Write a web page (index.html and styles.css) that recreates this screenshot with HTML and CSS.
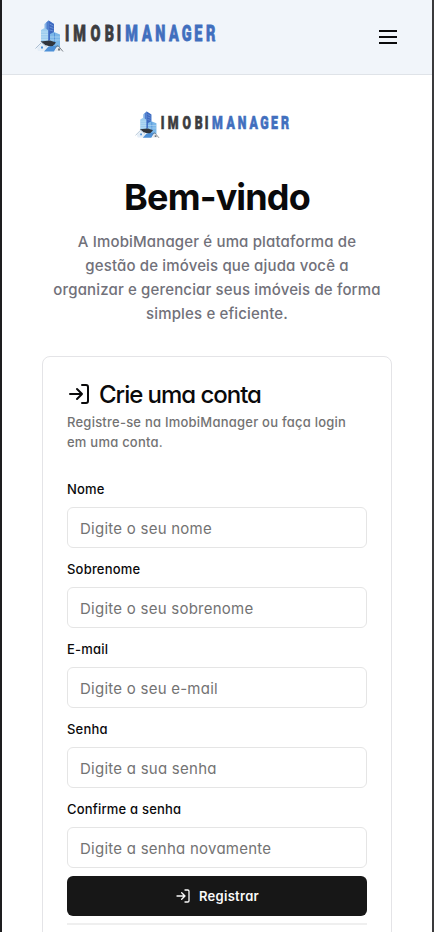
FILE: index.html
```
<!DOCTYPE html>
<html lang="pt-BR">
<head>
<meta charset="utf-8">
<meta name="viewport" content="width=device-width, initial-scale=1">
<title>ImobiManager</title>
<link rel="stylesheet" href="styles.css">
</head>
<body>
<svg class="defs" width="0" height="0" aria-hidden="true">
  <symbol id="login" viewBox="0 0 24 24"><path d="M15 3h4a2 2 0 0 1 2 2v14a2 2 0 0 1-2 2h-4M10 17l5-5-5-5M15 12H3" fill="none" stroke="currentColor" stroke-width="2" stroke-linecap="round" stroke-linejoin="round"/></symbol>
</svg>
<div class="page">
  <header class="header">
    <svg class="brand" viewBox="0 0 190 34" role="img" aria-label="ImobiManager">
      <g id="logo">
        <path d="M8.500 4l4-3.500 5.500 3.500v10l-5 8h-4.500z" fill="#86b4e6"/>
        <path d="M10.500 2.500l2-2v21h-2z" fill="#4e7dce"/><path d="M12.500 .5l5.500 3.500v12l-5.500 5z" fill="#3d69c0"/>
        <path d="M13.500 4l4 2M13.500 7l4 1.500M13.500 10l4 1" stroke="#85a8e0" stroke-width=".6"/>
        <path d="M5 10l3.500-2 3.500 2v12H5z" fill="#9fcdef"/>
        <path d="M14 14l4-2 6 2.500V27H14z" fill="#7bb7e8"/>
        <path d="M18.500 13v12" stroke="#5593d8" stroke-width="1"/>
        <path d="M5 12h7M5 14.500h7M5 17h7M5 19.500h7M14 17h10M14 20h10" stroke="#cde8f8" stroke-width=".5"/>
        <path d="M1 28l5-5 6 4v4H2z" fill="#e5eef7"/>
        <path d="M4.500 21.500l9.500-1 6 2-4 4.500-7-2z" fill="#30343b"/>
        <path d="M-.5 28.500l6-6 5 4" fill="none" stroke="#a3b8cc" stroke-width=".9"/>
        <path d="M5 26.500h2v2H5z" fill="#4a8fd7"/>
        <path d="M12.500 26.500l9-1-3.500 6H8z" fill="#4d90d7"/>
        <path d="M18.500 31l3.500-4.500 4 4.500z" fill="#e4e8ed"/>
        <path d="M19.500 27.500l2.500-2 5 6" fill="none" stroke="#73787e" stroke-width=".9"/><path d="M22 28.500h2v2h-2z" fill="#70767d"/>
        <g class="wordmark" transform="translate(-.3 21.200) scale(.64 1)">
          <text x="49.200 68.600 93.300 115.200 130" y="0" fill="#3c3d40" stroke="#3c3d40">IMOBI</text>
          <text x="149.700 173.900 194.800 216.100 235.900 254.200 273.400" y="0" fill="#416fbe" stroke="#416fbe">MANAGER</text>
        </g>
      </g>
    </svg>
    <button class="menu" aria-label="Menu"><svg width="24" height="24" viewBox="0 0 24 24"><path d="M3 6h18M3 12h18M3 18h18" stroke="currentColor" stroke-width="2"/></svg></button>
  </header>
  <main class="main">
    <svg class="hero-logo" viewBox="0 0 190 34" role="img" aria-label="ImobiManager"><use href="#logo"/></svg>
    <h1 class="heading">Bem-vindo</h1>
    <p class="intro">A ImobiManager é uma plataforma de<br>gestão de imóveis que ajuda você a<br>organizar e gerenciar seus imóveis de forma<br>simples e eficiente.</p>
    <section class="card">
      <h2 class="title"><svg width="24" height="24"><use href="#login"/></svg><span>Crie uma conta</span></h2>
      <p class="description">Registre-se na ImobiManager ou faça login<br>em uma conta.</p>
      <form class="form">
        <label class="field"><span class="label">Nome</span><input class="input" type="text" placeholder="Digite o seu nome"></label>
        <label class="field"><span class="label">Sobrenome</span><input class="input" type="text" placeholder="Digite o seu sobrenome"></label>
        <label class="field"><span class="label">E-mail</span><input class="input" type="email" placeholder="Digite o seu e-mail"></label>
        <label class="field"><span class="label">Senha</span><input class="input" type="password" placeholder="Digite a sua senha"></label>
        <label class="field"><span class="label">Confirme a senha</span><input class="input" type="password" placeholder="Digite a senha novamente"></label>
        <button class="submit" type="button"><svg width="16" height="16"><use href="#login"/></svg><span>Registrar</span></button>
      </form>
      <div class="divider"></div>
    </section>
  </main>
</div>
</body>
</html>
```
FILE: styles.css
```
* { box-sizing: border-box; margin: 0; }
html { height: 100%; overflow: hidden; }
body {
  height: 932px;
  overflow: hidden;
  font-family: Inter, "Open Sans", sans-serif;
  font-feature-settings: "cv11", "ss03";
  color: #0a0a0b;
  background: #fff;
}
.defs { position: absolute; }
svg { display: block; flex: none; }
.page {
  height: 932px;
  overflow: hidden;
  border-left: 2px solid #1d1d1f;
  border-right: 2px solid #3a3a3c;
}
.header {
  display: flex;
  align-items: center;
  justify-content: space-between;
  height: 75px;
  padding: 0 32px 0 34px;
  background: #f1f5fa;
  border-bottom: 1px solid #dfe3e8;
}
.brand { width: 190px; height: 34px; overflow: visible; }
.wordmark {
  font-family: Roboto, sans-serif;
  font-weight: 900;
  font-size: 22.500px;
  text-anchor: middle;
  stroke-width: .8px;
}
.menu { padding: 0; border: 0; background: none; color: #0a0a0b; }
.main { display: flex; flex-direction: column; align-items: center; }
.hero-logo { width: 164px; height: 29px; margin: 36px 1px 0 0; overflow: visible; }
.heading {
  margin-top: 37px;
  font-size: 36px;
  line-height: 40px;
  font-weight: 700;
  letter-spacing: -0.85px;
}
.intro {
  margin-top: 13px;
  font-size: 15px;
  line-height: 24px;
  font-weight: 460;
  letter-spacing: 0.15px;
  color: #71717a;
  text-align: center;
  white-space: nowrap;
}
.card {
  width: 350px;
  height: 620px;
  margin-top: 30px;
  padding: 25px 24px 24px;
  border: 1px solid #e4e4e7;
  border-radius: 8px;
}
.title {
  display: flex;
  align-items: center;
  gap: 8px;
  height: 24px;
  font-size: 24px;
  line-height: 24px;
  font-weight: 500;
  letter-spacing: -1.03px;
  white-space: nowrap;
}
.title span { position: relative; top: 1px; }
.description {
  margin-top: 6px;
  font-size: 13px;
  line-height: 20px;
  font-weight: 460;
  letter-spacing: 0.23px;
  color: #737373;
  white-space: nowrap;
}
.form { display: flex; flex-direction: column; gap: 8px; margin-top: 24px; }
.field { display: flex; flex-direction: column; height: 72px; }
.label { height: 31px; font-size: 13px; line-height: 26px; font-weight: 550; letter-spacing: 0.2px; }
.input {
  width: 100%;
  height: 41px;
  padding: 2px 12px 0;
  border: 1px solid #e5e5e5;
  border-radius: 6px;
  background: #fff;
  font: inherit;
  font-feature-settings: inherit;
  font-size: 15px;
  font-weight: 430;
  letter-spacing: 0.25px;
}
.input::placeholder { color: #737373; opacity: 1; }
.submit {
  display: flex;
  align-items: center;
  justify-content: center;
  gap: 8px;
  height: 40px;
  border: 0;
  border-radius: 6px;
  background: #171717;
  color: #fafafa;
  font: inherit;
  font-feature-settings: inherit;
  font-size: 13px;
  font-weight: 600;
  letter-spacing: 0.3px;
}
.divider { height: 2px; margin-top: 7px; background: #efefef; }
```
